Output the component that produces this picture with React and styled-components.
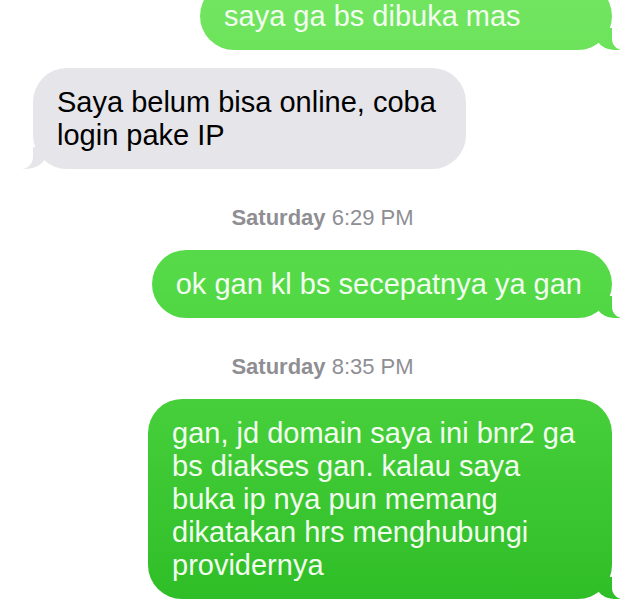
import React from 'react';
import styled, { createGlobalStyle } from 'styled-components';

const GlobalStyle = createGlobalStyle`
  html, body {
    margin: 0;
    padding: 0;
    background: #ffffff;
    overflow: hidden;
  }
  body {
    font-family: "Liberation Sans", Arial, sans-serif;
    -webkit-font-smoothing: antialiased;
  }
`;

// minWidth: the first bubble is cut off at the top (its longer lines are off screen)
const messages = [
  { type: 'msg', mine: true, minWidth: 412, lines: ['saya ga bs dibuka mas'] },
  { type: 'msg', mine: false, lines: ['Saya belum bisa online, coba', 'login pake IP'] },
  { type: 'stamp', day: 'Saturday', time: '6:29 PM' },
  { type: 'msg', mine: true, lines: ['ok gan kl bs secepatnya ya gan'] },
  { type: 'stamp', day: 'Saturday', time: '8:35 PM' },
  {
    type: 'msg',
    mine: true,
    minWidth: 464,
    lines: [
      'gan, jd domain saya ini bnr2 ga',
      'bs diakses gan. kalau saya',
      'buka ip nya pun memang',
      'dikatakan hrs menghubungi',
      'providernya'
    ]
  }
];

const App = () => (
  <>
    <GlobalStyle />
    <Thread>
      {messages.map((m, i) =>
        m.type === 'stamp' ? (
          <Stamp key={i}>
            <strong>{m.day}</strong> {m.time}
          </Stamp>
        ) : (
          <Bubble key={i} $mine={m.mine} $minWidth={m.minWidth}>
            {m.lines.map((line) => (
              <Line key={line}>{line}</Line>
            ))}
          </Bubble>
        )
      )}
    </Thread>
  </>
);

export default App;

const Thread = styled.main`
  display: flex;
  flex-direction: column;
  padding: 0 28px 0 33px;
  margin-top: -18px;
`;

const Line = styled.span`
  display: block;
  white-space: nowrap;
`;

const Stamp = styled.div`
  align-self: center;
  margin: 37px 0 20px;
  font-size: 22px;
  line-height: 24px;
  color: #8e8e93;

  strong {
    font-weight: 700;
  }
`;

const Bubble = styled.div`
  position: relative;
  box-sizing: border-box;
  align-self: ${({ $mine }) => ($mine ? 'flex-end' : 'flex-start')};
  width: fit-content;
  min-width: ${({ $minWidth }) => ($minWidth ? `${$minWidth}px` : '0')};
  padding: 18px 30px 17px 24px;
  border-radius: 34px;
  font-size: 29px;
  line-height: 33px;
  color: ${({ $mine }) => ($mine ? '#f2fdf0' : '#000000')};
  background: ${({ $mine }) =>
    $mine ? 'linear-gradient(180deg, #72e560 0px, #52d845 300px, #2ebd26 611px) fixed' : '#e5e5ea'};

  & + & {
    margin-top: 18px;
  }

  &::before,
  &::after {
    content: '';
    position: absolute;
    bottom: 0;
    height: 22px;
  }

  &::before {
    width: 24px;
    background: inherit;
    ${({ $mine }) =>
      $mine
        ? 'right: -8px; border-bottom-left-radius: 18px 15px;'
        : 'left: -11px; border-bottom-right-radius: 20px 15px;'}
  }

  &::after {
    width: 26px;
    background: #ffffff;
    ${({ $mine }) =>
      $mine
        ? 'right: -26px; border-bottom-left-radius: 11px;'
        : 'left: -26px; border-bottom-right-radius: 12px;'}
  }
`;
